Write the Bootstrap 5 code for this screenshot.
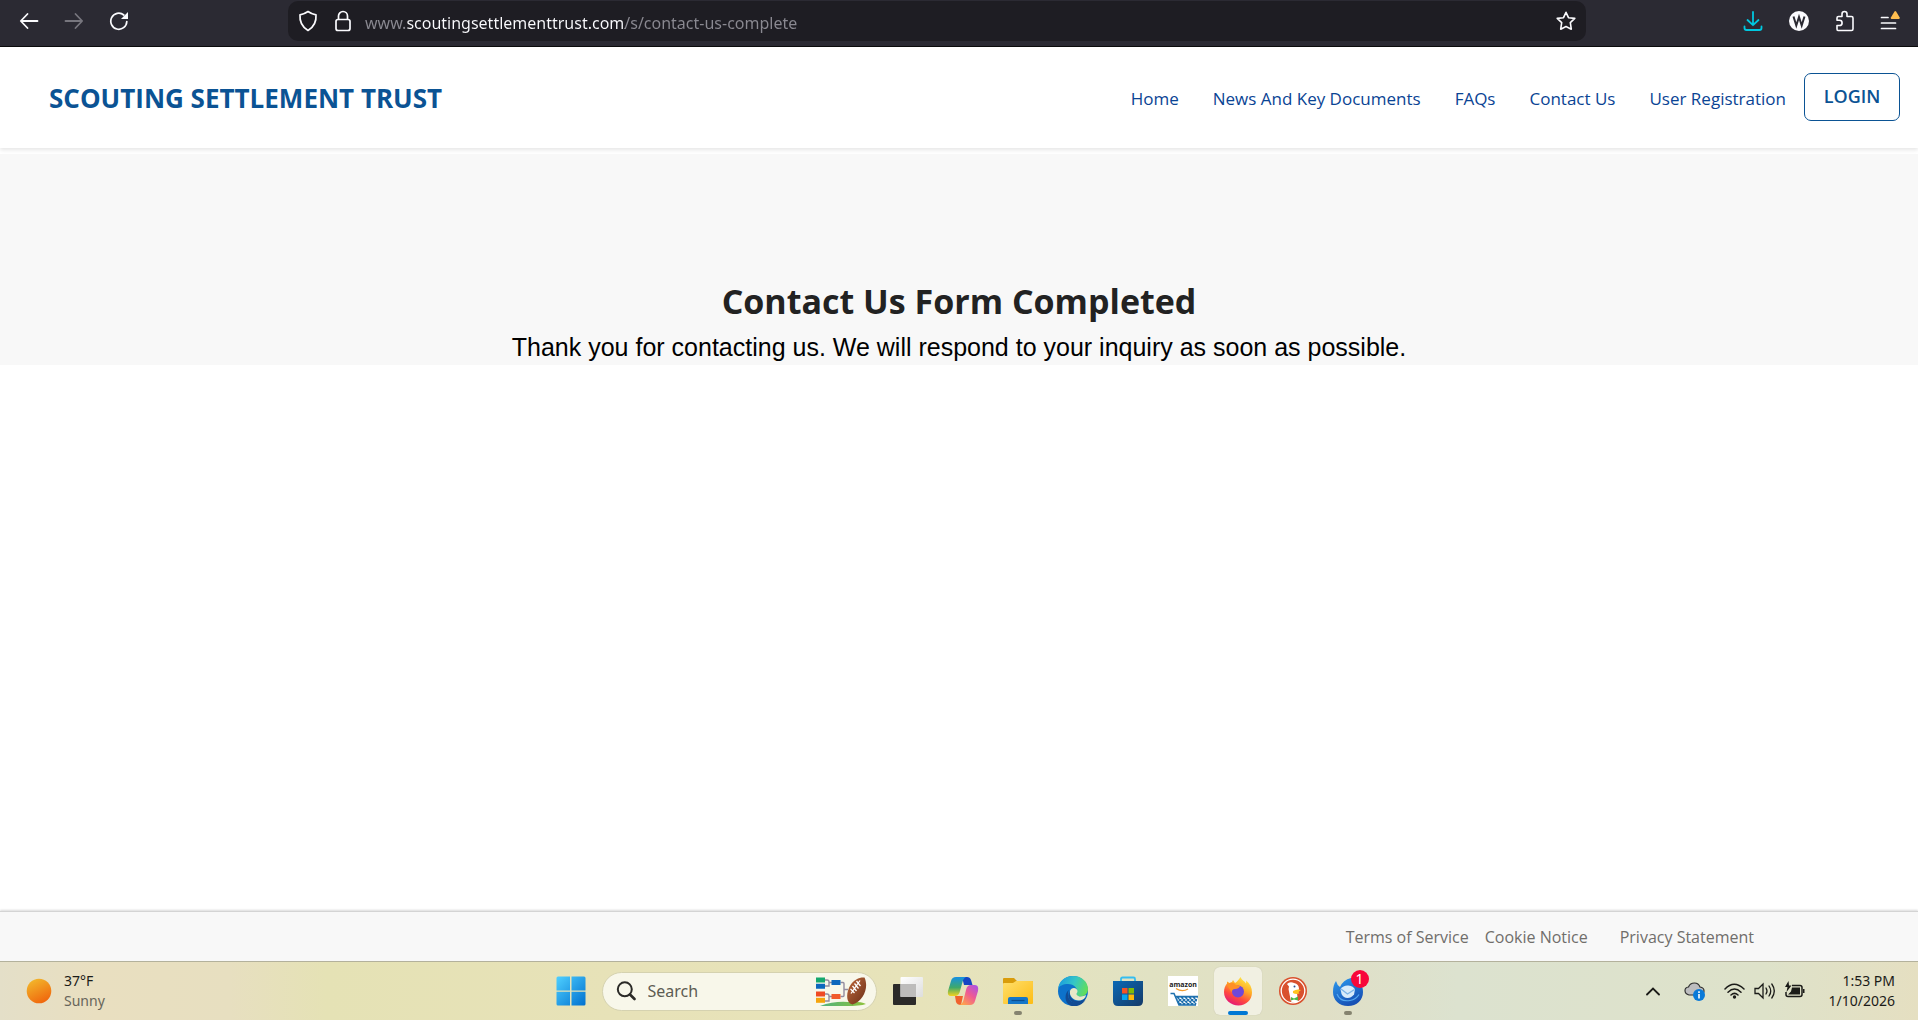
<!DOCTYPE html>
<html lang="en">
<head>
<meta charset="utf-8">
<meta name="viewport" content="width=device-width, initial-scale=1">
<title>Contact Us Form Completed</title>
<link href="https://cdn.jsdelivr.net/npm/bootstrap@5.3.0/dist/css/bootstrap.min.css" rel="stylesheet">
<style>
  :root { --ui: "Open Sans", "Noto Sans", sans-serif; --system: "Noto Sans", "Open Sans", sans-serif; --brand: #0b5394; --link: #0a4494; }
  body { font-family: var(--ui); background: #fff; color: #000; }
  svg { display: block; flex: none; }
  .plain { background: none; border: 0; padding: 0; display: flex; align-items: center; justify-content: center; }

  /* browser toolbar */
  .toolbar { background: #2b2a33; border-bottom: 1px solid #0c0c0d; height: 47px; padding: 1px 18px 5px; }
  .toolbar-side { flex: 0 0 270px; gap: 23px; padding-bottom: 1px; }
  .toolbar-side .plain { width: 22px; height: 22px; }
  .toolbar-end { flex: 1 1 0; gap: 25px; }
  .address { background: #1e1d23; border-radius: 10px; height: 40px; flex: 0 1 1298px; padding: 0 10px; }
  .address input {
    border: 0; outline: 0; padding: 4px 0 0; font-family: var(--system); font-size: 16px; line-height: 24px; height: 32px; margin-left: 13px;
    color: transparent; -webkit-background-clip: text; background-clip: text;
    background-image: linear-gradient(90deg, #8a8991 42px, #fbfbfe 42px 260px, #8a8991 260px);
  }

  /* site header */
  .site-header { background: #fff; height: 101px; box-shadow: 0 2px 4px rgba(0,0,0,.1); padding: 0 18px 2px 49px; margin-bottom: 6px; }
  .site-title { color: var(--brand); font-weight: 700; font-size: 26px; line-height: 36px; text-decoration: none; padding-top: 2px; }
  .site-nav { gap: 34px; padding-top: 4px; }
  .site-nav a { color: var(--link); font-size: 17px; line-height: 24px; text-decoration: none; }
  .btn-login { color: var(--brand); border: 1px solid var(--brand); border-radius: 7px; font-weight: 600; font-size: 18px; line-height: 24px; width: 96px; height: 48px; margin-left: 18px; padding: 0 0 2px; }

  /* message band */
  .hero-band { background: #f8f8f8; padding-top: 120px; text-align: center; }
  .hero-band h1 { font-size: 34px; line-height: 54px; font-weight: 700; color: #222; margin: 0; }
  .hero-band p { font-family: "Liberation Sans", Arial, sans-serif; font-size: 25px; line-height: 36px; margin: 0; padding-top: 1px; }

  /* footer */
  .site-footer { background: #f8f8f8; border-top: 1px solid #d4d4d4; box-shadow: 0 -1px 2px rgba(0,0,0,.15); height: 50px; padding: 0 164px 0 20px; }
  .site-footer a { color: #706e6b; font-size: 16px; line-height: 24px; text-decoration: none; }

  /* taskbar */
  .taskbar { height: 59px; border-top: 1px solid #b3b19c; font-family: var(--system); font-size: 14px; line-height: 20px; color: #1b1b18;
    background: linear-gradient(90deg, #e4dfc8 0, #e9dfc0 5%, #e7dfc0 12%, #e5e2b5 17%, #e7e2b8 32%, #e7e3ba 48%, #e1e2c3 60%, #e0dfc6 69%, #dce2cf 76%, #dee2ca 92%, #e5dfc1 100%); }
  .task-side { flex: 1 1 0; }
  .weather { gap: 10px; }
  .task-apps { gap: 7px; }
  .app { width: 48px; height: 48px; border-radius: 6px; position: relative; }
  .app.active { background: #f1f0e2; box-shadow: 0 0 1px #b9b79f; }
  .app::after { content: ""; position: absolute; bottom: 0; left: 50%; translate: -50% 0; height: 4px; border-radius: 2px; }
  .app.open::after { width: 8px; background: #85836f; }
  .app.active::after { width: 20px; background: #0078d4; }
  .app .count { position: absolute; top: 3px; right: 3px; width: 18px; height: 18px; border-radius: 50%; background: #f8073a; color: #fff; font-size: 14px; line-height: 18px; text-align: center; }
  .finder { width: 275px; height: 39px; border-radius: 20px; background: #f8f7ea; border: 1px solid #d5d2b0; padding: 0 8px 0 13px; }
  .finder input { border: 0; outline: 0; background: none; font-size: 16px; line-height: 24px; padding: 0; min-width: 0; color: #5d5c52; }
  .finder input::placeholder { color: #5d5c52; }
  .muted-text { color: #67655a; }
  .tray-cloud { margin-right: 18px; }
  .tray-clock { margin-left: 23px; margin-right: 23px; }
</style>
<script src="https://cdn.jsdelivr.net/npm/bootstrap@5.3.0/dist/js/bootstrap.bundle.min.js"></script>
</head>
<body class="d-flex flex-column min-vh-100">

<div class="toolbar d-flex align-items-center">
  <div class="toolbar-side d-flex align-items-center">
    <button class="plain" aria-label="Back"><svg width="20" height="18" viewBox="0 0 20 18" fill="none" stroke="#fbfbfe" stroke-width="1.8" stroke-linecap="round" stroke-linejoin="round"><path d="M18.500 9H2M8.500 2 1.800 9l6.700 7"/></svg></button>
    <button class="plain" aria-label="Forward"><svg width="20" height="18" viewBox="0 0 20 18" fill="none" stroke="#77767e" stroke-width="1.8" stroke-linecap="round" stroke-linejoin="round"><path d="M1.500 9H18M11.500 2l6.700 7-6.700 7"/></svg></button>
    <button class="plain" aria-label="Reload"><svg width="20" height="20" viewBox="0 0 20 20"><path d="M17.800 10.500A8 8 0 1 1 14.800 4" fill="none" stroke="#fbfbfe" stroke-width="1.700" stroke-linecap="round"/><path d="M19 1v7h-7z" fill="#fbfbfe"/></svg></button>
  </div>
  <div class="address d-flex align-items-center">
    <svg width="20" height="22" viewBox="0 0 20 22" fill="none" stroke="#fbfbfe" stroke-width="1.700" stroke-linejoin="round"><path d="M10 1.500c2.500 1.800 5 2.800 8 3.300.5 6.500-1.700 12-8 15.700C3.700 16.800 1.500 11.300 2 4.800c3-.5 5.500-1.500 8-3.300z"/></svg>
    <svg class="ms-3" width="18" height="22" viewBox="0 0 18 22" fill="none" stroke="#fbfbfe" stroke-width="1.700"><rect x="2" y="9.500" width="14" height="11" rx="2"/><path d="M4.500 9.500V6a4.500 4.500 0 0 1 9 0v3.500"/></svg>
    <input class="flex-grow-1" type="text" aria-label="Address" value="www.scoutingsettlementtrust.com/s/contact-us-complete">
    <button class="plain" aria-label="Bookmark"><svg width="20" height="20" viewBox="0 0 20 20" fill="none" stroke="#fbfbfe" stroke-width="1.600" stroke-linejoin="round"><path d="m10 1.300 2.500 5.400 6.300.7-4.500 4.200 1 6.600L10 15.500l-5.300 2.700 1-6.600L1.200 7.400l6.300-.7z"/></svg></button>
  </div>
  <div class="toolbar-end d-flex align-items-center justify-content-end">
    <button class="plain" aria-label="Downloads"><svg width="20" height="20" viewBox="0 0 20 20" fill="none" stroke="#00c8e0" stroke-width="1.800" stroke-linecap="round" stroke-linejoin="round"><path d="M10 1v13M4.500 9l5.500 5.200L15.500 9M1.500 15.500V17q0 2 2 2h13q2 0 2-2v-1.500"/></svg></button>
    <button class="plain" aria-label="Account"><svg width="22" height="22" viewBox="0 0 22 22"><circle cx="11" cy="11" r="10" fill="#fbfbfe"/><path d="m5.500 6.500 2.800 9L11 7l2.700 8.500 2.800-9" fill="none" stroke="#2b2a33" stroke-width="2"/></svg></button>
    <button class="plain" aria-label="Extensions"><svg width="20" height="22" viewBox="0 0 20 22" fill="none" stroke="#fbfbfe" stroke-width="1.600" stroke-linejoin="round"><path d="M3 20.500q-1 0-1-1.500v-3.500h2.500a2.600 2.600 0 0 0 0-5.200H2V8q0-1.500 1.500-1.500H7V4a2.500 2.500 0 0 1 5 0v2.500h4.500Q18 6.500 18 8v11q0 1.500-1.500 1.500z"/></svg></button>
    <button class="plain" aria-label="Menu"><svg width="20" height="22" viewBox="0 0 20 22"><path d="M1.500 7.500H8M1.500 13h14M1.500 18.500h14" stroke="#fbfbfe" stroke-width="1.700" stroke-linecap="round"/><path d="M14.500 1.500q.8-1 1.600 0l3.600 6q.3 1.500-1 1.500h-7q-1.300 0-.8-1.500z" fill="#ffbd4f"/></svg></button>
  </div>
</div>

<header class="site-header d-flex align-items-center">
  <a class="site-title me-auto" href="#">SCOUTING SETTLEMENT TRUST</a>
  <nav class="site-nav d-flex">
    <a href="#">Home</a>
    <a href="#">News And Key Documents</a>
    <a href="#">FAQs</a>
    <a href="#">Contact Us</a>
    <a href="#">User Registration</a>
  </nav>
  <button class="btn btn-login">LOGIN</button>
</header>

<main class="flex-grow-1">
  <section class="hero-band">
    <h1>Contact Us Form Completed</h1>
    <p>Thank you for contacting us. We will respond to your inquiry as soon as possible.</p>
  </section>
</main>

<footer class="site-footer d-flex align-items-center justify-content-end">
  <a href="#">Terms of Service</a>
  <a class="ms-3" href="#">Cookie Notice</a>
  <a class="ms-3 ps-3" href="#">Privacy Statement</a>
</footer>

<div class="taskbar d-flex align-items-center">
  <div class="task-side weather d-flex align-items-center">
    <svg class="ms-4" width="30" height="30" viewBox="0 0 30 30"><defs><linearGradient id="sun" x1=".2" y1="0" x2=".7" y2="1"><stop stop-color="#f2b92c"/><stop offset="1" stop-color="#f0640c"/></linearGradient></defs><circle cx="15" cy="15" r="12.300" fill="url(#sun)"/></svg>
    <div><div>37°F</div><div class="muted-text">Sunny</div></div>
  </div>

  <div class="task-apps d-flex align-items-center">
    <button class="plain app" aria-label="Start"><svg width="30" height="30" viewBox="0 0 30 30"><defs><linearGradient id="win" x1="0" y1="0" x2="1" y2="1"><stop stop-color="#4fd0ff"/><stop offset="1" stop-color="#0070cf"/></linearGradient></defs><path fill="url(#win)" d="M2 .5h12v14H.5V2Q.5.500 2 .5zM15.500.5H28q1.500 0 1.500 1.500v12.500h-14zM.5 15.800h13.500v13.700H2Q.5 29.500.5 28zM15.500 15.800h14V28q0 1.500-1.500 1.500H15.500z"/></svg></button>
    <label class="finder d-flex align-items-center">
      <svg width="20" height="20" viewBox="0 0 20 20" fill="none" stroke="#2b2a27"><circle cx="8.800" cy="8.300" r="7" stroke-width="2"/><path d="m14 13.500 4.500 4.500" stroke-width="2.600" stroke-linecap="round"/></svg>
      <input class="flex-grow-1 ms-2 ps-1" type="text" placeholder="Search" aria-label="Search">
      <svg width="52" height="31" viewBox="0 0 52 31"><defs><linearGradient id="ball" x1="0" y1="0" x2="1" y2="1"><stop stop-color="#c06a3c"/><stop offset="1" stop-color="#6a2e18"/></linearGradient><linearGradient id="turf"><stop stop-color="#4fb27e"/><stop offset="1" stop-color="#8fc23c"/></linearGradient></defs>
        <path d="M4 30q14-5 28-4 12-1 18 2-6 2-20 2z" fill="url(#turf)"/>
        <path d="M9 4h2q2 0 2 2v4H9M13 6.500h3M9 18h2q2 0 2 2v5H9M13 20.500h3M24.500 6.500H27q1 0 1 1v12q0 1-1 1h-2.500M28 13.500h4" fill="none" stroke="#938b9f" stroke-width="1.400"/>
        <path fill="#15a86d" d="M0 1.500h9v5H0z"/><path fill="#0d67bd" d="M0 7.800h9v5H0zM15.500 4h9v5h-9z"/><path fill="#ef4a23" d="M0 15.500h9v5H0z"/><path fill="#f5a40d" d="M0 21.800h9v5H0z"/><path fill="#f15a2b" d="M15.500 18h9v5h-9z"/>
        <path d="M48.500 1.500C53 11 48 25 36.500 28.500 29.500 27 30 16 34.500 9 38 3.500 43.500 1 48.500 1.500z" fill="url(#ball)"/><path d="m44 4.500-9 13M40.500 5l4 5M38.500 7.500l4 5M36.500 10l4 5M34.500 13l4 4" stroke="#fff" stroke-width="1.300" fill="none"/></svg>
    </label>
    <button class="plain app" aria-label="Task view"><svg width="30" height="30" viewBox="0 0 30 30"><defs><linearGradient id="tvf" x1="0" y1="0" x2="1" y2="1"><stop stop-color="#fff"/><stop offset="1" stop-color="#ddd"/></linearGradient></defs><rect x="0" y="8" width="23" height="21" rx="1" fill="#2b2a29"/><rect x="7.500" y="1" width="22.500" height="20" rx="1" fill="url(#tvf)"/><path d="M7.500 8H23v13H7.500z" fill="#bdbcbb"/></svg></button>
    <button class="plain app" aria-label="Copilot"><svg width="32" height="30" viewBox="0 0 32 30"><defs><linearGradient id="cpa" x1="0" y1="0" x2="0" y2="1"><stop stop-color="#1690e4"/><stop offset=".55" stop-color="#3ea96a"/><stop offset="1" stop-color="#f5d21e"/></linearGradient><linearGradient id="cpb" x1="1" y1="0" x2=".2" y2="1"><stop stop-color="#a451ee"/><stop offset=".5" stop-color="#ee5a94"/><stop offset="1" stop-color="#ffa44b"/></linearGradient></defs>
      <path d="M15 1h5q3 0 4 3l1.500 5H17z" fill="#1546c4"/><path d="M8 20h8l-2 9q-4 0-5-3z" fill="#f1622d"/>
      <path d="M9 1h10q-2.500 1-3.500 5L13 15q-1 5-5 5H4q-4 0-3-5L4 5q1-4 5-4z" fill="url(#cpa)"/><path d="M23 29H12.500q3-1 4-5L19 14q1-5 5-5h4q4 0 3 6l-3 10q-1 4-5 4z" fill="url(#cpb)"/></svg></button>
    <button class="plain app open" aria-label="File Explorer"><svg width="30" height="28" viewBox="0 0 30 28"><defs><linearGradient id="fol" x1="0" y1="0" x2="1" y2="1"><stop stop-color="#ffdf6c"/><stop offset="1" stop-color="#fdbc14"/></linearGradient></defs><path d="M0 2q0-1 1-1h10l3 3h15q1 0 1 2v6H0z" fill="#d99c0b"/><path d="M0 7q0-1 1-1h9l3-2h16q1 0 1 1v21q0 1-1 1H1q-1 0-1-1z" fill="url(#fol)"/><path d="M5 27v-5q0-2 2-2h16q2 0 2 2v5z" fill="#1677c9"/><path d="M8.500 23.500h13" stroke="#0b4e91" stroke-width="1.200"/></svg></button>
    <button class="plain app" aria-label="Edge"><svg width="30" height="30" viewBox="0 0 30 30"><defs><linearGradient id="edt" x1="0" y1=".3" x2="1" y2=".6"><stop stop-color="#1b9de0"/><stop offset=".5" stop-color="#35c6c6"/><stop offset="1" stop-color="#63df56"/></linearGradient></defs><circle cx="15" cy="15" r="15" fill="#0d72cb"/><path d="M0 13C1 5 7 0 15 0c9 0 15 6 15 13 0 5-4 7.500-8 7.500-3 0-4.500-1.500-3.500-3C21 13 16 8 10 8 5 8 1 10 0 13z" fill="url(#edt)"/><path d="M11 14c-3 5 0 13 8 13 4 0 6-1 8.500-3C24 29 19 31 14 30 6 28 6 17 11 14z" fill="#124b93"/><path d="M12 15c1-4 7-4 7.500 0 .2 1.500-1.500 2.500-.8 3.700 1.500 2.500 6.500 2 9.300.3-.5 3-3 5.500-7 5.500-6 0-10-5-9-9.500z" fill="#e8e8c9"/><path d="M12 15c-1.500 5 2 9.500 7.500 10 4 .3 7-1.500 8.500-3.500-1 4-5 6-9 5.800C12 27 8 20 12 15z" fill="#124b93"/></svg></button>
    <button class="plain app" aria-label="Microsoft Store"><svg width="30" height="30" viewBox="0 0 30 30"><defs><linearGradient id="sto" x1="0" y1="0" x2="1" y2="1"><stop stop-color="#0b69b5"/><stop offset="1" stop-color="#153a68"/></linearGradient></defs><path d="M8 6V3q0-1.500 1.500-1.500h11Q22 1.500 22 3v3" fill="none" stroke="#35bdf0" stroke-width="1.800"/><path d="M0 5h30v20q0 5-5 5H5q-5 0-5-5z" fill="url(#sto)"/><path fill="#f35325" d="M9 12h5.500v5.500H9z"/><path fill="#81bc06" d="M15.500 12H21v5.500h-5.500z"/><path fill="#05a6f0" d="M9 18.500h5.500V24H9z"/><path fill="#ffba08" d="M15.500 18.500H21V24h-5.500z"/></svg></button>
    <button class="plain app" aria-label="Amazon"><svg width="30" height="30" viewBox="0 0 30 30"><defs><pattern id="mesh" width="4" height="4" patternUnits="userSpaceOnUse"><path d="M0 0l4 4M4 0 0 4" stroke="#1e70ae" stroke-width="1.300"/></pattern></defs><path fill="#fff" d="M0 0h30v30H0z"/><text x="15" y="11" text-anchor="middle" font-family="Open Sans, sans-serif" font-weight="700" font-size="7" fill="#222">amazon</text><path d="M8 12.500q6 4 12 .5" fill="none" stroke="#f29b2c" stroke-width="1.200"/><path d="M7 20h23l-2 9H11z" fill="url(#mesh)"/><path d="M2.500 17.500H6L11 29h17M7 20.500h23" fill="none" stroke="#1e70ae" stroke-width="1.500"/></svg></button>
    <button class="plain app active" aria-label="Firefox"><svg width="30" height="30" viewBox="0 0 30 30"><defs><linearGradient id="ffx" x1=".8" y1="0" x2=".3" y2="1"><stop stop-color="#fff04a"/><stop offset=".4" stop-color="#ffab25"/><stop offset=".7" stop-color="#ff4a3d"/><stop offset="1" stop-color="#e2157c"/></linearGradient></defs><path d="M17.500 1c1 3 4 4 5.500 6.500.3-1 .3-2 0-3 4 3 6 7 6 12C29 24 23 29.500 15.500 29.500S1 24 1 16c0-3.500 1.200-6.500 3-8.500V5.500q1.500.5 2.500 1.500L9 6l1-2 2 3c2-1 4-4 5.500-6z" fill="url(#ffx)"/><circle cx="15" cy="15.500" r="6" fill="#7048d8"/><path d="M4 8q6-3 9 1l4 1q-1 3-5 3-3 0-3.500 3C6 12 5 11 4 8z" fill="#ff9025"/></svg></button>
    <button class="plain app" aria-label="DuckDuckGo"><svg width="28" height="28" viewBox="0 0 28 28"><circle cx="14" cy="14" r="14" fill="#d9512e"/><circle cx="14" cy="14" r="11.800" fill="none" stroke="#fff" stroke-width="1.300"/><path d="M8 7q3-3 7-1 5 1 5 6l-2 4 1 9q-4 1-7-.5-1-5-2-10-.8-3 0-5z" fill="#fff"/><path d="M14 14q4-2.500 8-1l-2.500 2 1 1.500q-4 1-6.500-.5z" fill="#ffc41f"/><circle cx="15.500" cy="9.500" r="1" fill="#2d4f8e"/><path d="m12 20 3 1.500 4-2v4l-4-1-3 1z" fill="#4cb748"/></svg></button>
    <button class="plain app open" aria-label="Thunderbird"><svg width="30" height="30" viewBox="0 0 30 30"><defs><linearGradient id="tbd" x1="0" y1="0" x2=".5" y2="1"><stop stop-color="#2d9cf0"/><stop offset="1" stop-color="#1750b4"/></linearGradient></defs><path d="M3 5q1 4 4 6Q10 4 18 2c8 0 12 7 12 14 0 8-6 14-15 14S0 24 0 16C0 11 1 8 3 5z" fill="url(#tbd)"/><path d="M7.500 13q3-4 8-3.500 5 .5 6.500 4l-1 5q-3 3.500-6.500 3.500-4 0-6-4z" fill="#d9ebfa"/><path d="m8 13 6.500 5 7-4.500" fill="none" stroke="#7bb4e8" stroke-width="1.400"/><path d="M4 18q3 8 13 6.500 6-1 9-6" fill="none" stroke="#55a8f0" stroke-width="1.200"/></svg><span class="count">1</span></button>
  </div>

  <div class="task-side d-flex align-items-center justify-content-end">
    <button class="plain me-4" aria-label="Hidden icons"><svg width="14" height="9" viewBox="0 0 14 9" fill="none" stroke="#1b1b18" stroke-width="1.800" stroke-linecap="round"><path d="m1 7.500 6-6 6 6"/></svg></button>
    <button class="plain tray-cloud" aria-label="OneDrive"><svg width="22" height="20" viewBox="0 0 22 20"><path d="M5 14Q1 13 1 9.500 1 6.500 4.500 6 6 2 10.500 2q4 0 5.500 4 4 .5 4 4t-4 4z" fill="#bdbdbf" stroke="#303030" stroke-width="1.200"/><circle cx="15" cy="14" r="6" fill="#0a7ad8"/><path d="M15 13v4.500M15 10.300v1.600" stroke="#fff" stroke-width="1.600"/></svg></button>
    <button class="plain" aria-label="Network and sound"><svg width="82" height="20" viewBox="0 0 82 20" fill="none" stroke="#1b1b18" stroke-width="1.500"><path d="M1 8q9-9.500 19 0M4 11.200q6.500-6.500 13 0M7 14q3.500-3.200 7 0" stroke-linecap="round"/><circle cx="10.500" cy="16" r="1.700" fill="#1b1b18" stroke="none"/>
      <path d="M31 7.500h3.500L39 3v14l-4.500-4.500H31zM42 7q2 3 0 6M45 5q3.500 5 0 10M47.800 3q5 7 0 14" stroke-width="1.300" stroke-linecap="round"/><path d="M68 4.500h8q2 0 2 2v7q0 2-2 2H64q-2 0-2-2V11" /><path d="M68 6.500h8v7H64l3-3z" fill="#1b1b18" stroke="none"/><path d="M79 8h1.500v4H79z" fill="#1b1b18" stroke="none"/><path d="m64.500 0-3.500 6h2.500l-1 5 5-6.500H65z" fill="#1b1b18" stroke="none"/></svg></button>
    <div class="text-end tray-clock"><div>1:53 PM</div><div>1/10/2026</div></div>
  </div>
</div>
</body>
</html>
